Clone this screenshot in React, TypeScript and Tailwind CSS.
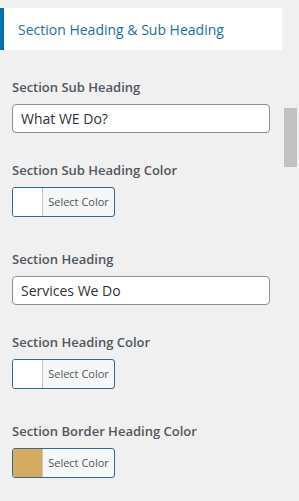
const font = { fontFamily: '"Open Sans", "Liberation Sans", sans-serif' };

function Label({ children }: { children: React.ReactNode }) {
  return <div className="mb-[8px] h-[18px] text-[13px] leading-[18px] font-semibold text-[#50575e]">{children}</div>;
}

function TextField({ value }: { value: string }) {
  return (
    <div className="flex h-[29px] w-[258px] items-center rounded-[4px] border border-[#8c8f94] bg-white px-[8px] text-[14px] text-[#2c3338]">
      {value}
    </div>
  );
}

function ColorButton({ color }: { color: string }) {
  return (
    <div className="flex h-[30px] w-[103px] overflow-hidden rounded-[3px] border border-[#2f6a93] bg-[#f6f7f7]">
      <div className="w-[30px] border-r border-[#c3c4c7]" style={{ backgroundColor: color }} />
      <div className="flex flex-1 items-center justify-center text-[11px] text-[#50575e]">Select Color</div>
    </div>
  );
}

export default function App() {
  return (
    <div className="relative h-[501px] w-[299px] overflow-hidden bg-[#f0f0f0]" style={font}>
      <div className="mt-[8px] flex h-[42px] w-[282px] items-center border-l-4 border-[#0073aa] bg-white pl-[14px] text-[14px] text-[#1d6f9e]">
        Section Heading &amp; Sub Heading
      </div>

      <div className="absolute left-[284px] top-[108px] h-[59px] w-[13px] bg-[#c1c1c1]" />

      <div className="px-[12px] pt-[28px]">
        <Label>Section Sub Heading</Label>
        <TextField value="What WE Do?" />
        <div className="h-[28px]" />
        <Label>Section Sub Heading Color</Label>
        <ColorButton color="#ffffff" />
        <div className="h-[33px]" />
        <Label>Section Heading</Label>
        <TextField value="Services We Do" />
        <div className="h-[28px]" />
        <Label>Section Heading Color</Label>
        <ColorButton color="#ffffff" />
        <div className="h-[33px]" />
        <Label>Section Border Heading Color</Label>
        <ColorButton color="#d5ab62" />
      </div>
    </div>
  );
}
